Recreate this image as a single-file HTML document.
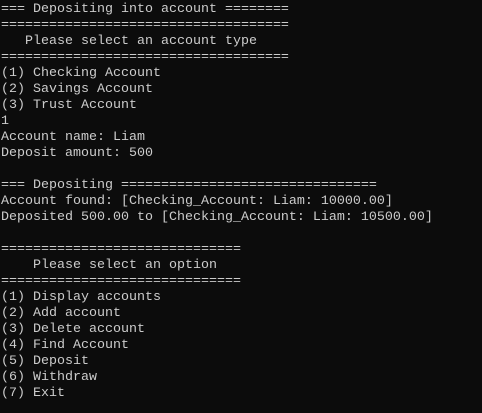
<!DOCTYPE html>
<html><head><style>
html,body{margin:0;padding:0;background:#0c0c0c;width:482px;height:413px;overflow:hidden}
pre{margin:0;padding:2px 0 0 1px;font-family:"Liberation Mono",monospace;font-size:13.33px;line-height:16px;color:#cccccc;}
</style></head><body><pre>=== Depositing into account ========
====================================
   Please select an account type
====================================
(1) Checking Account
(2) Savings Account
(3) Trust Account
1
Account name: Liam
Deposit amount: 500

=== Depositing ================================
Account found: [Checking_Account: Liam: 10000.00]
Deposited 500.00 to [Checking_Account: Liam: 10500.00]

==============================
    Please select an option
==============================
(1) Display accounts
(2) Add account
(3) Delete account
(4) Find Account
(5) Deposit
(6) Withdraw
(7) Exit</pre></body></html>
